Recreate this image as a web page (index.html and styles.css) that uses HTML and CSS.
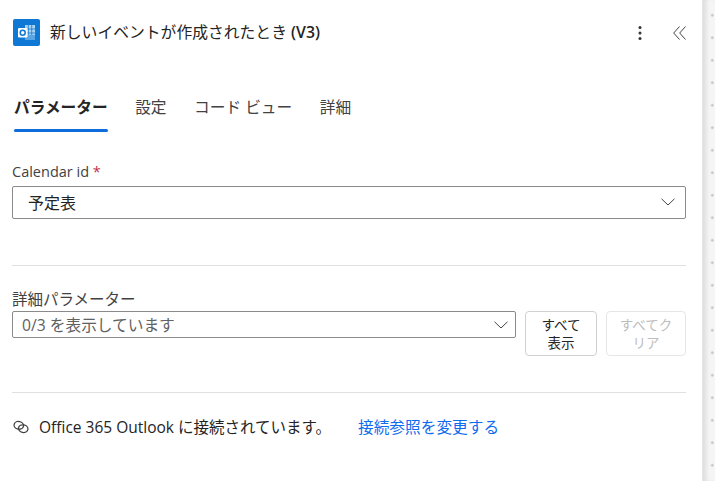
FILE: index.html
```html
<!DOCTYPE html>
<html lang="ja">
<head>
  <meta charset="UTF-8" />
  <title>新しいイベントが作成されたとき (V3)</title>
  <link rel="stylesheet" href="styles.css">
</head>
<body>
  <div class="panel">
    <header class="panel-header">
      <svg class="app-icon" width="27" height="27" viewBox="0 0 27 27">
        <rect width="27" height="27" rx="2" fill="#0f78d4"/>
        <rect x="12" y="6" width="10" height="15" fill="#a9d3f2"/>
        <path d="M15.300 6v15M18.700 6v15M12 10h10M12 14h10M12 18h10" stroke="#0f78d4" stroke-width="0.8"/>
        <path d="M12 16h10v5H12z" fill="#5aa5e4"/>
        <rect x="5" y="9" width="9.500" height="9.500" rx="1" fill="#fff"/>
        <circle cx="9.700" cy="13.700" r="2.500" fill="none" stroke="#0f78d4" stroke-width="1.500"/>
      </svg>
      <h1 class="panel-title">新しいイベントが作成されたとき <b>(V3)</b></h1>
      <svg class="more-icon" width="4" height="16" viewBox="0 0 4 16">
        <circle cx="2" cy="2.500" r="1.500" fill="#333"/>
        <circle cx="2" cy="8" r="1.500" fill="#333"/>
        <circle cx="2" cy="13.500" r="1.500" fill="#333"/>
      </svg>
      <svg class="collapse-icon" width="13" height="14" viewBox="0 0 13 14">
        <path d="M6.500 .5L.7 7l5.800 6.500M12.500 .5L6.700 7l5.800 6.500" fill="none" stroke="#444" stroke-width="1"/>
      </svg>
    </header>

    <nav class="tabs">
      <span class="tab active">パラメーター</span>
      <span class="tab">設定</span>
      <span class="tab">コード ビュー</span>
      <span class="tab">詳細</span>
    </nav>

    <label class="field-label latin">Calendar id <span class="required">*</span></label>
    <div class="select select-main">
      <span>予定表</span>
      <svg width="14" height="8" viewBox="0 0 14 8"><path d="M.5 .8L7 7l6.500-6.200" fill="none" stroke="#444" stroke-width="1"/></svg>
    </div>

    <hr class="divider first">

    <label class="field-label small">詳細パラメーター</label>
    <div class="advanced">
      <div class="select select-small">
        <span>0/3 を表示しています</span>
        <svg width="14" height="8" viewBox="0 0 14 8"><path d="M.5 .8L7 7l6.500-6.200" fill="none" stroke="#444" stroke-width="1"/></svg>
      </div>
      <button class="btn show-all">すべて表示</button>
      <button class="btn clear-all" disabled>すべてクリア</button>
    </div>

    <hr class="divider second">

    <div class="connection">
      <svg class="link-icon" width="16" height="14" viewBox="0 0 16 14">
        <ellipse cx="5.800" cy="5.300" rx="4.800" ry="3.800" transform="rotate(12 5.800 5.300)" fill="none" stroke="#424242" stroke-width="1.300"/>
        <ellipse cx="10.200" cy="8.700" rx="4.800" ry="3.800" transform="rotate(12 10.200 8.700)" fill="none" stroke="#424242" stroke-width="1.300"/>
      </svg>
      <span class="connection-text">Office 365 Outlook に接続されています。</span>
      <a class="connection-link">接続参照を変更する</a>
    </div>
  </div>
  <div class="canvas"></div>
</body>
</html>
```

FILE: styles.css
```css
* {
  box-sizing: border-box;
}

html, body {
  height: 100%;
}

body {
  margin: 0;
  display: flex;
  overflow: hidden;
  background: #fff;
  color: #242424;
  font-family: "Open Sans", "Noto Sans CJK JP", sans-serif;
}

.panel {
  width: 703px;
  padding: 19px 16px 0 12px;
  background: #fff;
  border-right: 1px solid #e6e6e6;
  flex-shrink: 0;
}

.canvas {
  flex: 1;
  background-color: #f5f5f5;
  background-image: radial-gradient(circle, #c4c4c4 1px, transparent 1.500px);
  background-size: 22.500px 22.500px;
  background-position: -2px 4px;
  box-shadow: inset 5px 0 4px -2px #dcdcdc;
}

.panel-header {
  display: flex;
  align-items: center;
  height: 27px;
  padding-left: 1px;
}

.app-icon {
  flex-shrink: 0;
}

.panel-title {
  flex: 1;
  margin: -2px 0 0 10px;
  font-size: 15.800px;
  font-weight: 400;
}

.panel-title b {
  font-size: 15.800px;
  font-weight: 600;
}

.more-icon {
  margin-right: 31px;
}

.tabs {
  display: flex;
  gap: 27.500px;
  margin-top: 33px;
  padding-left: 2px;
  height: 53px;
}

.tab {
  height: 53px;
  padding-top: 16px;
  font-size: 15.700px;
  color: #424242;
}

.tab.active {
  font-weight: 700;
  color: #242424;
  position: relative;
}

.tab.active::after {
  content: "";
  position: absolute;
  left: 0;
  right: 0;
  bottom: 0;
  height: 3px;
  border-radius: 2px;
  background: #0f6cdc;
}

.field-label {
  display: block;
  margin-top: 29px;
  font-size: 15.500px;
  line-height: 22px;
  color: #424242;
}

.field-label.latin {
  font-size: 14.500px;
}

.required {
  color: #c4314b;
}

.select {
  display: flex;
  align-items: center;
  justify-content: space-between;
  border: 1px solid #8a8a8a;
  border-radius: 2px;
  background: #fff;
}

.select-main {
  height: 33px;
  margin-top: 3px;
  padding: 0 10px 1px 15px;
  font-size: 16px;
}

.select-small {
  flex: 1;
  height: 27px;
  padding: 0 7px 0 9px;
  font-size: 15.700px;
  color: #616161;
}

.divider {
  margin: 0;
  border: none;
  border-top: 1px solid #e0e0e0;
}

.divider.first {
  margin-top: 46px;
}

.divider.second {
  margin-top: 36px;
}

.field-label.small {
  margin-top: 22px;
  margin-bottom: 1px;
}

.advanced {
  display: flex;
  align-items: flex-start;
  gap: 9px;
}

.btn {
  height: 45px;
  padding-top: 1px;
  border: 1px solid #d1d1d1;
  border-radius: 4px;
  background: #fff;
  color: #242424;
  font-family: inherit;
  font-size: 13.500px;
  line-height: 18px;
}

.show-all {
  width: 72px;
  padding-left: 12px;
  padding-right: 12px;
}

.clear-all {
  width: 80px;
  padding-left: 10px;
  padding-right: 10px;
  border-color: #e6e6e6;
  color: #bdbdbd;
}

.connection {
  display: flex;
  align-items: center;
  margin-top: 22px;
  padding-left: 1px;
  font-size: 15.500px;
}

.link-icon {
  flex-shrink: 0;
}

.connection-text {
  margin-left: 10px;
}

.connection-link {
  margin-left: 27px;
  font-size: 15.700px;
  color: #0f6cee;
}
```
